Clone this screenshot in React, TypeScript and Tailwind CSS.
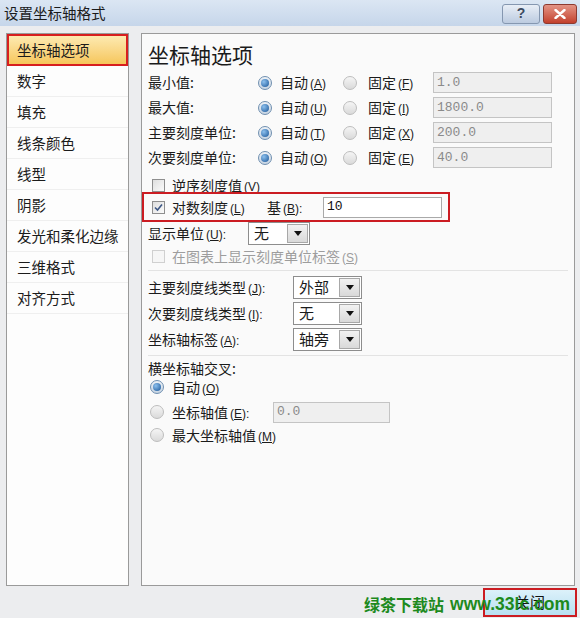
import React from 'react';

const cjk = "font-['Noto_Sans_CJK_SC',sans-serif]";

function Key({ k, colon }: { k: string; colon?: boolean }) {
  return (
    <span className="ml-[2px] font-['Liberation_Sans',sans-serif] text-[12px]">
      (<span className="underline">{k}</span>){colon ? ':' : ''}
    </span>
  );
}

function Radio({ on }: { on?: boolean }) {
  return (
    <span
      className={`w-[14px] h-[14px] rounded-full border flex items-center justify-center shrink-0 ${
        on
          ? 'border-[#6f8fb0] bg-linear-to-b from-[#eef2f7] to-[#c7d4e2]'
          : 'border-[#bdbdbd] bg-linear-to-b from-[#f5f5f5] to-[#dadada]'
      }`}
    >
      {on && <span className="w-[8px] h-[8px] rounded-full bg-[radial-gradient(circle_at_35%_35%,#8cc0ee,#1a5597)]" />}
    </span>
  );
}

function Check({ on, disabled }: { on?: boolean; disabled?: boolean }) {
  return (
    <span
      className={`w-[13px] h-[13px] border flex items-center justify-center shrink-0 ${
        disabled ? 'border-[#d0d0d0] bg-[#f6f6f6]' : 'border-[#8e8e8e] bg-linear-to-br from-[#dedede] to-[#fbfbfb]'
      }`}
    >
      {on && (
        <svg width="9" height="9" viewBox="0 0 9 9">
          <path d="M1 4.5 L3.5 7 L8 1.5" stroke="#3d5784" strokeWidth="1.6" fill="none" />
        </svg>
      )}
    </span>
  );
}

function Field({ value, className, active }: { value: string; className: string; active?: boolean }) {
  return (
    <div
      className={`h-[21px] border flex items-center px-[3px] font-['Liberation_Mono',monospace] text-[13px] ${
        active ? 'bg-white border-[#a9a9a9] text-[#111]' : 'bg-[#efefef] border-[#c4c4c4] text-[#8a8a8a]'
      } ${className}`}
    >
      {value}
    </div>
  );
}

function Drop({ value, wide }: { value: string; wide?: boolean }) {
  return (
    <div className={`h-[23px] border border-[#8d8d8d] bg-white flex items-stretch ${wide ? 'w-[69px]' : 'w-[62px]'}`}>
      <span className="flex-1 flex items-center pl-[5px] text-[15px]">{value}</span>
      <span className="w-[21px] m-[1px] border border-[#a8a8a8] bg-linear-to-b from-[#f2f2f2] to-[#d9d9d9] flex items-center justify-center">
        <svg width="8" height="5" viewBox="0 0 8 5">
          <path d="M0 0 H8 L4 5 Z" fill="#111" />
        </svg>
      </span>
    </div>
  );
}

const valueRows = [
  { label: '最小值:', a: 'A', f: 'F', v: '1.0' },
  { label: '最大值:', a: 'U', f: 'I', v: '1800.0' },
  { label: '主要刻度单位:', a: 'T', f: 'X', v: '200.0' },
  { label: '次要刻度单位:', a: 'O', f: 'E', v: '40.0' },
];

const navItems = ['数字', '填充', '线条颜色', '线型', '阴影', '发光和柔化边缘', '三维格式', '对齐方式'];

export default function App() {
  return (
    <div className={`w-[580px] h-[618px] bg-[#ecedef] flex flex-col overflow-hidden text-[#1b1b1b] ${cjk}`}>
      {/* Title bar */}
      <div className="h-[26px] flex items-center bg-linear-to-b from-[#dbe6f3] to-[#c6d6ea] pl-[4px] pr-[3px]">
        <span className="text-[14.5px] text-[#1a1a1a]">设置坐标轴格式</span>
        <div className="ml-auto flex gap-[3px] pt-[1px]">
          <div className="w-[38px] h-[20px] rounded-[3px] border border-[#8597b0] bg-linear-to-b from-[#e8eef6] to-[#bccbe0] flex items-center justify-center font-['Liberation_Sans',sans-serif] font-bold text-[14px] text-[#3c4a60]">
            ?
          </div>
          <div className="w-[34px] h-[20px] rounded-[3px] border border-[#8d3a30] bg-linear-to-b from-[#e39385] to-[#c23f2c] flex items-center justify-center">
            <svg width="12" height="10" viewBox="0 0 12 10">
              <path d="M1.5 1 L10.5 9 M10.5 1 L1.5 9" stroke="#fff" strokeWidth="2.4" strokeLinecap="round" />
            </svg>
          </div>
        </div>
      </div>

      {/* Panels */}
      <div className="flex pt-[7px] pl-[6px] gap-[12px]">
        <div className="w-[123px] h-[553px] border border-[#9a9a9a] bg-[#fdfdfd] flex flex-col">
          <div className="h-[32px] border-2 border-[#d71f1f] bg-linear-to-b from-[#fdeab0] to-[#f6c65a] flex items-center pl-[8px] text-[14.5px]">
            坐标轴选项
          </div>
          {navItems.map((n) => (
            <div key={n} className="h-[31px] border-b border-[#efefef] flex items-center pl-[10px] text-[14.5px]">
              {n}
            </div>
          ))}
        </div>

        <div className="w-[434px] h-[553px] border border-[#9a9a9a] bg-[#fafafa] px-[6px] pt-[6px] text-[14px] flex flex-col">
          <div className="h-[30px] flex items-center text-[21px]">坐标轴选项</div>

          {valueRows.map((r) => (
            <div key={r.label} className="h-[25px] flex items-center">
              <span className="w-[110px]">{r.label}</span>
              <Radio on />
              <span className="ml-[8px] w-[63px]">
                自动<Key k={r.a} />
              </span>
              <Radio />
              <span className="ml-[11px] w-[65px]">
                固定<Key k={r.f} />
              </span>
              <Field value={r.v} className="w-[119px]" />
            </div>
          ))}

          <div className="h-[22px] pt-[8px] flex items-center pl-[4px]">
            <Check />
            <span className="ml-[7px]">
              逆序刻度值<Key k="V" />
            </span>
          </div>

          <div className="-ml-[6px] w-[308px] h-[30px] border-2 border-[#cb1c22] flex items-center pl-[8px]">
            <Check on />
            <span className="ml-[7px] w-[95px]">
              对数刻度<Key k="L" />
            </span>
            <span className="w-[56px]">
              基<Key k="B" colon />
            </span>
            <Field value="10" active className="w-[119px]" />
          </div>

          <div className="h-[22px] flex items-center">
            <span className="w-[100px]">
              显示单位<Key k="U" colon />
            </span>
            <Drop value="无" />
          </div>

          <div className="h-[24px] flex items-center pl-[4px] text-[#9d9d9d]">
            <Check disabled />
            <span className="ml-[7px]">
              在图表上显示刻度单位标签<Key k="S" />
            </span>
          </div>

          <div className="mt-[2px] h-px bg-[#e3e3e3]" />

          <div className="mt-[3px] h-[26px] flex items-center">
            <span className="w-[145px]">
              主要刻度线类型<Key k="J" colon />
            </span>
            <Drop value="外部" wide />
          </div>
          <div className="h-[26px] flex items-center">
            <span className="w-[145px]">
              次要刻度线类型<Key k="I" colon />
            </span>
            <Drop value="无" wide />
          </div>
          <div className="h-[26px] flex items-center">
            <span className="w-[145px]">
              坐标轴标签<Key k="A" colon />
            </span>
            <Drop value="轴旁" wide />
          </div>

          <div className="mt-[3px] h-px bg-[#e3e3e3]" />

          <div className="h-[20px] mt-[2px] flex items-center">横坐标轴交叉:</div>
          <div className="h-[18px] flex items-center pl-[2px]">
            <Radio on />
            <span className="ml-[8px]">
              自动<Key k="O" />
            </span>
          </div>
          <div className="mt-[3px] h-[26px] flex items-center pl-[2px]">
            <Radio />
            <span className="ml-[8px] w-[101px]">
              坐标轴值<Key k="E" colon />
            </span>
            <Field value="0.0" className="w-[117px]" />
          </div>
          <div className="h-[20px] flex items-center pl-[2px]">
            <Radio />
            <span className="ml-[8px]">
              最大坐标轴值<Key k="M" />
            </span>
          </div>
        </div>
      </div>

      {/* Bottom bar */}
      <div className="relative h-[32px] flex justify-end pr-[3px] pt-[2px]">
        <div className="w-[94px] h-[29px] border-2 border-[#cb1c22] bg-linear-to-b from-[#dcf1fa] to-[#b8e0f1] flex items-center justify-center text-[15px] text-[#111]">
          关闭
        </div>
        <div className="absolute left-[364px] top-[5px] flex items-center font-bold text-[#1d8a1d] whitespace-nowrap">
          <span className="text-[16px]">绿茶下载站</span>
          <span className="ml-[6px] text-[17.5px] font-['Liberation_Sans',sans-serif]">www.33lc.com</span>
        </div>
      </div>
    </div>
  );
}
